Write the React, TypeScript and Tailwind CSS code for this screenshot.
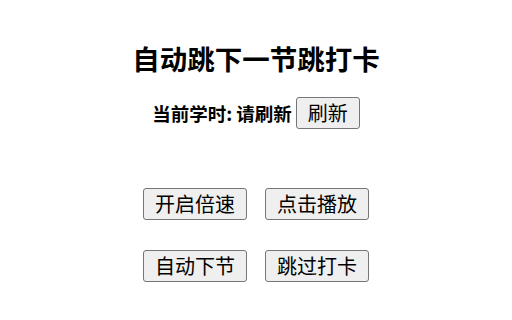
import React from "react";

const btn =
  "h-[32px] px-[11px] border border-[#767676] bg-[#efefef] rounded-[3px] text-[20px] leading-none text-black flex items-center justify-center";

export default function App() {
  return (
    <div
      className="w-[512px] h-[320px] bg-white flex flex-col items-center text-black"
      style={{ fontFamily: '"Noto Sans CJK SC", "Noto Sans", sans-serif' }}
    >
      <h1 className="mt-[42px] text-[27.5px] leading-[32px] font-bold">自动跳下一节跳打卡</h1>
      <div className="mt-[23px] flex items-center">
        <span className="text-[18.5px] leading-[24px] font-semibold">当前学时: 请刷新</span>
        <button className={btn + " ml-[4px] h-[31px]"}>刷新</button>
      </div>
      <div className="mt-[59px] grid grid-cols-2 gap-x-[18px] gap-y-[30px]">
        <button className={btn}>开启倍速</button>
        <button className={btn}>点击播放</button>
        <button className={btn}>自动下节</button>
        <button className={btn}>跳过打卡</button>
      </div>
    </div>
  );
}
